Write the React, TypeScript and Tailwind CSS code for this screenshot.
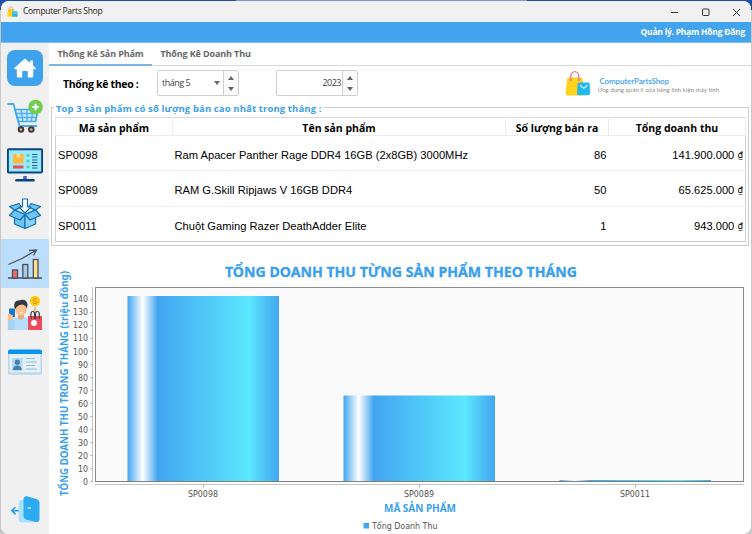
import type { ReactNode } from "react";

const products = [
  { code: "SP0098", name: "Ram Apacer Panther Rage DDR4 16GB (2x8GB) 3000MHz", sold: 86, total: "141.900.000" },
  { code: "SP0089", name: "RAM G.Skill Ripjaws V 16GB DDR4", sold: 50, total: "65.625.000" },
  { code: "SP0011", name: "Chuột Gaming Razer DeathAdder Elite", sold: 1, total: "943.000" },
];

function BagLogo({ className }: { className: string }) {
  return (
    <svg className={className} viewBox="0 0 26 26">
      <path d="M2 9.500Q2.200 7.500 4 7.500H15.500Q17.500 7.500 17.700 9.500L19 24Q19 25.500 17 25.500H2.500Q.5 25.500.7 23.500Z" fill="#ffd31c" />
      <path d="M5.800 10V6.500a4 4.800 0 0 1 8 0V10" fill="none" stroke="#f0709c" strokeWidth="1.300" />
      <circle cx="5.800" cy="10" r="1" fill="#f0709c" />
      <circle cx="13.800" cy="10" r="1" fill="#f0709c" />
      <path d="M14 12.500H23Q24.600 12.500 24.700 14L25 23.500Q25 25.300 23.300 25.300H13.500Q12 25.300 12 23.500L12.500 14Q12.600 12.500 14 12.500Z" fill="#22b8ea" />
      <path d="M15.500 15.500q3.300 5 6.500 0" fill="none" stroke="#fff" strokeWidth="1.200" strokeLinecap="round" />
    </svg>
  );
}

function HomeIcon() {
  return (
    <svg className="h-9 w-9" viewBox="0 0 36 36">
      <rect width="36" height="36" rx="8" fill="#3ea2ec" />
      <path d="M18 8.500 7.400 17.900q-.6 1 .5 1.300H9.800V26.300q0 1.200 1.200 1.200H15.200V22q0-1 1-1h3.600q1 0 1 1v5.500H25q1.200 0 1.200-1.200V19.200h2q1.100-.3.500-1.300L26 15.500V10.500H23.200v2.600Z" fill="#fff" />
    </svg>
  );
}

function CartIcon() {
  return (
    <svg className="h-9 w-9" viewBox="0 0 36 36">
      <path d="M1 5H6.500L12.500 27H29.500" fill="none" stroke="#45aaf2" strokeWidth="1.800" strokeLinejoin="round" strokeLinecap="round" />
      <path d="M8 10.500H31L28.500 22.500H11.500Z" fill="#d0ebfc" stroke="#3fa8f4" strokeWidth="1.700" strokeLinejoin="round" />
      <path d="M14 11l2 12M20 11v12M26 11l-2 12M9.500 14.500h21M10.500 18.500h19" fill="none" stroke="#4caef3" strokeWidth="1.400" />
      <circle cx="14" cy="30.500" r="2.300" fill="#c9b9b6" stroke="#46342f" strokeWidth="1.900" />
      <circle cx="24.300" cy="30.500" r="2.300" fill="#c9b9b6" stroke="#46342f" strokeWidth="1.900" />
      <circle cx="28.600" cy="8" r="7.300" fill="#72cc50" />
      <path d="M28.600 4.700v6.600M25.300 8h6.600" stroke="#fff" strokeWidth="2" />
    </svg>
  );
}

function MonitorIcon() {
  return (
    <svg className="h-9 w-9" viewBox="0 0 36 36">
      <rect x=".9" y="1.200" width="34.200" height="23.300" rx="1" fill="#98ebff" stroke="#0c4482" strokeWidth="1.900" />
      <rect x="6" y="6" width="10.500" height="9.500" fill="#ffb93c" />
      <rect x="9.800" y="6" width="3" height="3.600" fill="#ffe1a0" />
      <rect x="6" y="17.500" width="10.500" height="3" fill="#ef4b56" />
      <path d="M19.500 7.500H22.500M19.500 13H22.500M19.500 19H22.500" stroke="#62c7a4" strokeWidth="2.600" />
      <path d="M25 6.500h5.500M25 9h5.500M25 12h5.500M25 14.500h5.500M25 17.500h5.500M25 20h5.500" stroke="#205f9b" strokeWidth="1.100" />
      <path d="M18 28v4" stroke="#3f62d0" strokeWidth="3.500" />
      <path d="M9.500 32.200H26.500" stroke="#0c4482" strokeWidth="2.600" strokeLinecap="round" />
    </svg>
  );
}

function BoxIcon() {
  return (
    <svg className="mt-px h-9 w-9" viewBox="0 0 36 36">
      <g fill="#6fc5f7" stroke="#156db2" strokeWidth="1.200" strokeLinejoin="round">
        <path d="M7.500 13 18 17.500V31.500L7.500 27Z" />
        <path d="M28.500 13 18 17.500V31.500L28.500 27Z" fill="#8bd3fb" />
        <path d="M7.500 13 18 8.500 28.500 13 18 17.500Z" fill="#dff3fe" />
        <path d="M7.500 13 2.500 18.500 13 23 18 17.500Z" />
        <path d="M28.500 13 33.500 18.500 23 23 18 17.500Z" />
        <path d="M7.500 13 2.500 9.500 12 6.500 14.500 10Z" />
        <path d="M28.500 13 33.500 9.500 24 6.500 21.500 10Z" />
        <path d="M15.500 2h5V10H24L18 16 12 10h3.500Z" fill="#fff" />
      </g>
    </svg>
  );
}

function StatsIcon() {
  return (
    <svg className="h-9 w-9" viewBox="0 0 36 36">
      <g fill="none" stroke="#4b4f58" strokeWidth="1.300">
        <path d="M1.500 18.500 15 12.500 29.500 4M22 4.500 29.500 4 26.500 9.500" />
        <path d="M1 32H35" strokeWidth="1.500" />
        <rect x="5.500" y="24" width="5" height="8" fill="#f0696c" />
        <rect x="15.800" y="18.500" width="5" height="13.500" fill="#a8cbe6" />
        <rect x="26.300" y="13.500" width="4.700" height="18.500" fill="#ffe08a" />
      </g>
    </svg>
  );
}

function CustomerIcon() {
  return (
    <svg className="h-9 w-9" viewBox="0 0 36 36">
      <circle cx="28" cy="6" r="5.200" fill="#ffcb1a" />
      <path d="M28 12v6M30 4.200q-4-1.600-4 .5 0 1 2 1.300t2 1.500q0 1.900-4 .5" fill="none" stroke="#ce960a" strokeWidth="1" />
      <path d="M5 25Q8 22 15 21.500L22 23V35H3Z" fill="#b6ddfb" />
      <path d="M11 18h6v5l-3 2-3-2Z" fill="#eda77b" />
      <ellipse cx="14" cy="14" rx="5.800" ry="6.800" fill="#fac191" />
      <path d="M7.500 13Q6 5 12 5.500 19 3 20.500 9L20 14Q19 10 15 9.500 10 10 8.500 14Z" fill="#353941" />
      <path d="M12.500 17.500q1.500 1 3 0" fill="none" stroke="#fff" />
      <rect x="2" y="13.500" width="6" height="8.500" rx=".8" fill="#1676c7" />
      <path d="M.8 20q0-2 2-1.500l3 2V35H.8Z" fill="#f9bd8d" />
      <path d="M.8 25H8V35H1Z" fill="#a7d3f7" />
      <path d="M21 21H35V35H21Z" fill="#f0485c" />
      <path d="M24 24V18q1.800-3.500 3.500 0v6M28.500 24V18q2-3.500 3.700 0v6" fill="none" stroke="#433d45" strokeWidth="1.200" />
      <circle cx="27" cy="28" r="3" fill="#fff" />
    </svg>
  );
}

function CardIcon() {
  return (
    <svg className="h-9 w-9" viewBox="0 0 36 36">
      <path d="M1 8H35V29Q35 30.800 33 30.800H3Q1 30.800 1 29Z" fill="#b8d7ee" />
      <path d="M2.500 9H33.500V28.500H2.500Z" fill="#e4f1fb" />
      <path d="M1 10V7.500Q1 5.500 3 5.500H33Q35 5.500 35 7.500V10Z" fill="#0795ed" />
      <rect x="5" y="14" width="10.500" height="13" fill="#b6d7ef" />
      <circle cx="10.300" cy="18.200" r="2.600" fill="#447fad" />
      <path d="M6 26q0-4.500 4.300-4.500T14.700 26Z" fill="#447fad" />
      <path d="M19 14.500h9M19 18h11M19 21.500h9M19 25h11" stroke="#8fbddd" />
    </svg>
  );
}

function ExitIcon() {
  return (
    <svg className="h-9 w-9" viewBox="0 0 36 36">
      <rect x="11.500" y="8" width="19" height="22.500" rx="3.500" fill="#a6e2fc" />
      <path d="M16.500 7.500Q16.500 4 20 4.300L29.500 7Q32.500 8 32.500 11V27.500Q32.300 30.500 29 30L19 27.500Q16.500 26.500 16.500 23.500Z" fill="#2daaf0" />
      <path d="M20.500 16h3.500" stroke="#fff" strokeWidth="1" />
      <path d="M11 18.700H5M8 15.500 4.800 18.700 8 21.900" fill="none" stroke="#279fe8" strokeWidth="1.600" strokeLinecap="round" />
    </svg>
  );
}

function NavItem({ active = false, children }: { active?: boolean; children: ReactNode }) {
  return (
    <button className={`flex h-[49px] w-12 shrink-0 items-center justify-center ${active ? "bg-[#badefb]" : ""}`}>
      {children}
    </button>
  );
}

function SpinButtons() {
  return (
    <div className="flex w-[15px] flex-col items-center justify-center gap-[7px] border-l border-[#cfcfcf] bg-[#fafafa]">
      <svg className="h-1 w-[6px]" viewBox="0 0 6 4"><path d="M0 4 3 0 6 4Z" fill="#666" /></svg>
      <svg className="h-1 w-[6px]" viewBox="0 0 6 4"><path d="M0 0 3 4 6 0Z" fill="#666" /></svg>
    </div>
  );
}

const PLOT_BOTTOM = 481.5;
const bars = [
  { x: 127.5, y: 296, label: "SP0098", cx: 203 },
  { x: 343.5, y: 395.5, label: "SP0089", cx: 419 },
  { x: 559.5, y: 480, label: "SP0011", cx: 635 },
];

function RevenueChart() {
  const ticks = Array.from({ length: 15 }, (_, i) => i * 10);
  return (
    <svg className="block h-[287px] w-[702px]" viewBox="49 247 702 287">
      <defs>
        <linearGradient id="bar">
          <stop offset="0" stopColor="#42a5f0" />
          <stop offset=".1" stopColor="#fff" />
          <stop offset=".2" stopColor="#42a5f0" />
          <stop offset=".8" stopColor="#5ce8ff" />
          <stop offset="1" stopColor="#42a5f0" />
        </linearGradient>
      </defs>
      <g className="font-['Noto_Sans',sans-serif] font-bold" fill="#39a0ee">
        <text x="225" y="277" fontSize="14" stroke="#39a0ee" strokeWidth=".3" textLength="352" lengthAdjust="spacingAndGlyphs">TỔNG DOANH THU TỪNG SẢN PHẨM THEO THÁNG</text>
        <text x="384" y="511.500" fontSize="9.700" textLength="72" lengthAdjust="spacingAndGlyphs">MÃ SẢN PHẨM</text>
        <text transform="translate(67.500 496) rotate(-90)" fontSize="9.700" textLength="225" lengthAdjust="spacingAndGlyphs">TỔNG DOANH THU TRONG THÁNG (triệu đồng)</text>
      </g>
      <rect x="95.500" y="287.500" width="648" height="194" fill="#fafafa" stroke="#8c8c8c" />
      <path d="M92.500 287V482M95 484.500H744" stroke="#c4c4c4" fill="none" />
      <g className="font-['DejaVu_Sans',sans-serif]" fill="#555">
        {ticks.map((t) => {
          const y = PLOT_BOTTOM - t * 1.303;
          const w = String(t).length * 5;
          return (
            <g key={t}>
              <path d={`M90.500 ${Math.round(y - 0.5) + 0.5}H92.500`} stroke="#aaa" />
              <text x={88 - w} y={y + 3.3} fontSize="8.500" textLength={w} lengthAdjust="spacingAndGlyphs">{t}</text>
            </g>
          );
        })}
        {bars.map((b) => (
          <g key={b.label}>
            <rect x={b.x} y={b.y} width="151.500" height={PLOT_BOTTOM - b.y} fill="url(#bar)" />
            <path d={`M${b.cx}.5 485v2`} stroke="#aaa" />
            <text x={b.cx - 15} y="497" fontSize="8.500" textLength="30" lengthAdjust="spacingAndGlyphs">{b.label}</text>
          </g>
        ))}
        <rect x="363.500" y="523" width="5.500" height="5.500" fill="#42a5f0" />
        <text x="372" y="529" fontSize="8.500" textLength="65.500" lengthAdjust="spacingAndGlyphs">Tổng Doanh Thu</text>
      </g>
      <path d="M95 481.500H744" stroke="#808080" />
    </svg>
  );
}

export default function App() {
  return (
    <div className="h-[534px] w-[752px] overflow-hidden bg-[#c9c9c9] font-['Open_Sans',sans-serif]">
      <div className="flex h-[10px] bg-[#1d4fa6]">
        <div className="ml-[236px] w-[291px] bg-[#8198c8]" />
      </div>
      <div className="-mt-[9px] ml-px flex h-[533px] w-[750px] flex-col overflow-hidden rounded-lg bg-white">
        <header className="flex h-[21px] shrink-0 items-center bg-[#f1f1f1] pl-1.5">
          <BagLogo className="h-[11px] w-[11px]" />
          <span className="ml-[5px] text-[8.500px] tracking-[-0.3px] text-[#222]">Computer Parts Shop</span>
          <svg className="ml-auto h-[10px] w-[80px]" viewBox="0 0 80 10" fill="none" stroke="#333">
            <path d="M0 5.500h7M62 2l7 7M69 2l-7 7" />
            <rect x="31.500" y="2" width="6.500" height="6.500" rx="1" />
          </svg>
        </header>
        <div className="flex h-[21px] shrink-0 items-center justify-end border-b border-[#7cc2f7] bg-[#42a4ee] pt-px pr-1.5 text-[8.500px] font-bold tracking-[-0.25px] text-white">
          <span className="whitespace-nowrap">Quản lý. Phạm Hồng Đăng</span>
        </div>
        <div className="flex h-[491px]">
          <nav className="flex w-12 shrink-0 flex-col bg-[#f0f0f0]">
            <NavItem><HomeIcon /></NavItem>
            <NavItem><CartIcon /></NavItem>
            <NavItem><MonitorIcon /></NavItem>
            <NavItem><BoxIcon /></NavItem>
            <NavItem active><StatsIcon /></NavItem>
            <NavItem><CustomerIcon /></NavItem>
            <NavItem><CardIcon /></NavItem>
            <div className="mt-auto flex h-[49px] items-center justify-center"><ExitIcon /></div>
          </nav>
          <main className="flex w-[702px] flex-col">
            <div className="flex h-[23px] shrink-0 border-b border-[#d9d9d9] text-[9px] font-bold tracking-[-0.13px] text-[#666]">
              <div className="-mb-px flex w-[103px] items-center justify-center border-b-2 border-[#80b4e2] whitespace-nowrap">
                Thống Kê Sản Phẩm
              </div>
              <div className="flex items-center pl-[8.500px] whitespace-nowrap">Thống Kê Doanh Thu</div>
            </div>
            <div className="flex h-[41px] shrink-0 pt-1 pl-[14px]">
              <span className="mt-[7px] w-[94px] text-[10.500px] leading-[15px] font-bold tracking-[-0.33px] whitespace-nowrap text-black">Thống kê theo :</span>
              <div className="flex h-[26px] w-[82px] rounded-[2px] border border-[#cfcfcf] text-[9px] tracking-[-0.5px] text-[#444]">
                <div className="flex grow items-center justify-between pr-[3px] pl-1">
                  <span>tháng 5</span>
                  <svg className="h-1 w-[6px]" viewBox="0 0 6 4"><path d="M0 0 3 4 6 0Z" fill="#666" /></svg>
                </div>
                <SpinButtons />
              </div>
              <div className="ml-[37px] flex h-[26px] w-[82px] rounded-[2px] border border-[#cfcfcf] text-[9px] tracking-[-0.5px] text-[#444]">
                <div className="flex grow items-center justify-end pr-[1px]">2023</div>
                <SpinButtons />
              </div>
              <div className="ml-[207px] flex">
                <BagLogo className="h-[26px] w-[26px]" />
                <div className="ml-[6.500px] flex flex-col whitespace-nowrap">
                  <span className="mt-[6px] ml-[2px] font-['Lato',sans-serif] text-[8px] leading-[10px] font-semibold tracking-[-0.12px] text-[#39a0ee]">ComputerPartsShop</span>
                  <span className="font-['Lato',sans-serif] text-[6px] leading-[7px] tracking-[0.08px] text-[#888]">Ứng dụng quản lí cửa hàng linh kiện máy tính</span>
                </div>
              </div>
            </div>
            <section className="relative mr-[2px] ml-[2px] h-[139px] shrink-0 border border-[#cdcdcd] px-[3px] pt-[9px]">
              <h2 className="absolute -top-[6px] left-[2px] bg-white px-[2px] text-[9.500px] leading-[14px] font-bold tracking-[0.12px] whitespace-nowrap text-[#39a0ee]">
                Top 3 sản phẩm có số lượng bán cao nhất trong tháng :
              </h2>
              <table className="h-[125px] w-[691px] table-fixed border-collapse border border-[#d0d0d0] text-[11.150px] text-black">
                <thead>
                  <tr className="h-[18px]">
                    <th className="w-[117px] border border-[#ececec] border-t-[#d8d8d8] p-0 pt-[3px] text-[10.500px] leading-[14px]">Mã sản phẩm</th>
                    <th className="w-[333px] border border-[#ececec] border-t-[#d8d8d8] p-0 pt-[3px] text-[10.500px] leading-[14px]">Tên sản phẩm</th>
                    <th className="w-[103px] border border-[#ececec] border-t-[#d8d8d8] p-0 pt-[3px] text-[10.500px] leading-[14px]">Số lượng bán ra</th>
                    <th className="border border-[#ececec] border-t-[#d8d8d8] p-0 pt-[3px] text-[10.500px] leading-[14px]">Tổng doanh thu</th>
                  </tr>
                </thead>
                <tbody className="font-['Liberation_Sans',sans-serif]">
                  {products.map((p) => (
                    <tr key={p.code} className="h-[35px] border-b border-[#f0f0f0] last:border-[#cdcdcd]">
                      <td className="p-0 pt-[4px] pl-[2px] leading-4">{p.code}</td>
                      <td className="p-0 pt-[4px] pl-[2px] leading-4">{p.name}</td>
                      <td className="p-0 pt-[4px] pr-[2px] text-right leading-4">{p.sold}</td>
                      <td className="p-0 pt-[4px] pr-[2px] text-right leading-4">{p.total} <span className="relative -top-px font-['Noto_Sans',sans-serif] text-[9px] leading-none">₫</span></td>
                    </tr>
                  ))}
                </tbody>
              </table>
            </section>
            <div className="mt-px"><RevenueChart /></div>
          </main>
        </div>
      </div>
    </div>
  );
}
